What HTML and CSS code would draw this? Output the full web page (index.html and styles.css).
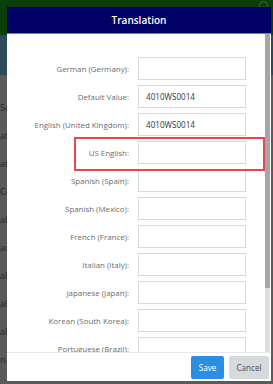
FILE: index.html
```html
<!DOCTYPE html>
<html lang="en">
<head>
    <meta charset="UTF-8">
    <meta name="viewport" content="width=device-width, initial-scale=1.0">
    <title>Translation</title>
    <link rel="stylesheet" href="styles.css">
</head>
<body>

<div class="app">
    <header class="shellbar">
        <span class="shell-icon"></span>
    </header>
    <div class="subbar"></div>
    <main class="page">
        <div class="bg-row">Sc</div>
        <div class="bg-row">at</div>
        <div class="bg-row">at</div>
        <div class="bg-row">Co</div>
        <div class="bg-row">ab</div>
        <div class="bg-row">ac</div>
        <div class="bg-row">al</div>
        <div class="bg-row">al</div>
        <div class="bg-row">al</div>
        <div class="bg-row">n..</div>
    </main>
</div>

<div class="dialog">
    <div class="dialog-header">Translation</div>
    <div class="dialog-body">
        <div class="dialog-scroll">
            <form class="form">
                <label class="form-label">German (Germany):</label>
                <input type="text" class="form-input" value="">
                <label class="form-label">Default Value:</label>
                <input type="text" class="form-input" value="4010WS0014">
                <label class="form-label">English (United Kingdom):</label>
                <input type="text" class="form-input" value="4010WS0014">
                <label class="form-label">US English:</label>
                <input type="text" class="form-input" value="">
                <label class="form-label">Spanish (Spain):</label>
                <input type="text" class="form-input" value="">
                <label class="form-label">Spanish (Mexico):</label>
                <input type="text" class="form-input" value="">
                <label class="form-label">French (France):</label>
                <input type="text" class="form-input" value="">
                <label class="form-label">Italian (Italy):</label>
                <input type="text" class="form-input" value="">
                <label class="form-label">Japanese (Japan):</label>
                <input type="text" class="form-input" value="">
                <label class="form-label">Korean (South Korea):</label>
                <input type="text" class="form-input" value="">
                <label class="form-label">Portuguese (Brazil):</label>
                <input type="text" class="form-input" value="">
            </form>
            <!-- annotation box around the US English row -->
            <div class="highlight"></div>
        </div>
        <div class="scrollbar"><div class="scrollbar-thumb"></div></div>
    </div>
    <div class="dialog-footer">
        <button class="btn btn-save">Save</button>
        <button class="btn btn-cancel">Cancel</button>
    </div>
</div>

</body>
</html>
```

FILE: styles.css
```css
html, body {
    margin: 0;
    height: 100%;
    overflow: hidden;
}
body {
    font-family: "Open Sans", "Liberation Sans", sans-serif;
    background: #5a5a5a;
}
.app {
    height: 384px;
    display: flex;
    flex-direction: column;
}
.shellbar {
    height: 35px;
    background: #0a3f0a;
    display: flex;
    justify-content: flex-end;
    align-items: flex-start;
    padding-right: 5px;
    box-sizing: border-box;
}
.shell-icon {
    width: 7px;
    height: 7px;
    margin-top: 1px;
    border: 1.5px solid #4d5e4d;
    border-radius: 50%;
}
.subbar {
    height: 40px;
    background: #2c4a58;
}
.page {
    flex: 1;
    background: #5a5a5a;
    padding-top: 19px;
}
.bg-row {
    height: 28px;
    line-height: 28px;
    font-size: 9px;
    color: #262626;
}

/* dialog */
.dialog {
    position: absolute;
    left: 7px;
    top: 7px;
    width: 264px;
    height: 374px;
    background: white;
    display: flex;
    flex-direction: column;
}
.dialog-header {
    height: 27px;
    line-height: 27px;
    background: #000066;
    color: white;
    text-align: center;
    font-size: 10px;
    font-weight: 600;
    border-bottom: 1px solid #7a7ab8;
    box-sizing: border-box;
}
.dialog-body {
    flex: 1;
    display: flex;
    overflow: hidden;
}
.dialog-scroll {
    flex: 1;
    position: relative;
    padding-top: 23px;
}
.form {
    display: grid;
    grid-template-columns: 122px 108px;
    grid-auto-rows: 23px;
    column-gap: 9px;
    row-gap: 5px;
    align-items: center;
}
.form-label {
    text-align: right;
    font-size: 7.9px;
    color: #6a6d70;
}
.form-input {
    height: 23px;
    width: 108px;
    box-sizing: border-box;
    border: 1px solid #d9d9d9;
    padding: 0 0 0 7px;
    font-family: inherit;
    font-size: 8.1px;
    color: #32363a;
    background: white;
}
.highlight {
    position: absolute;
    left: 67px;
    top: 103px;
    width: 191px;
    height: 34px;
    box-sizing: border-box;
    border: 2px solid #e5484d;
}
.scrollbar {
    width: 5px;
    margin-right: 1px;
    background: #dedede;
}
.scrollbar-thumb {
    height: 254px;
    background: #a6a6a6;
}

/* footer */
.dialog-footer {
    height: 29px;
    border-top: 1px solid #e8e8e8;
    box-sizing: border-box;
    display: flex;
    justify-content: flex-end;
    align-items: flex-start;
    gap: 5px;
    padding: 3px 2px 0 0;
    background: white;
}
.btn {
    height: 23px;
    border: none;
    border-radius: 2px;
    font-family: inherit;
    font-size: 8.1px;
    padding: 0;
    cursor: pointer;
}
.btn-save {
    width: 33px;
    background: #2a8fe2;
    color: white;
}
.btn-cancel {
    width: 40px;
    background: #d5dadf;
    color: #4a4f55;
}
```
